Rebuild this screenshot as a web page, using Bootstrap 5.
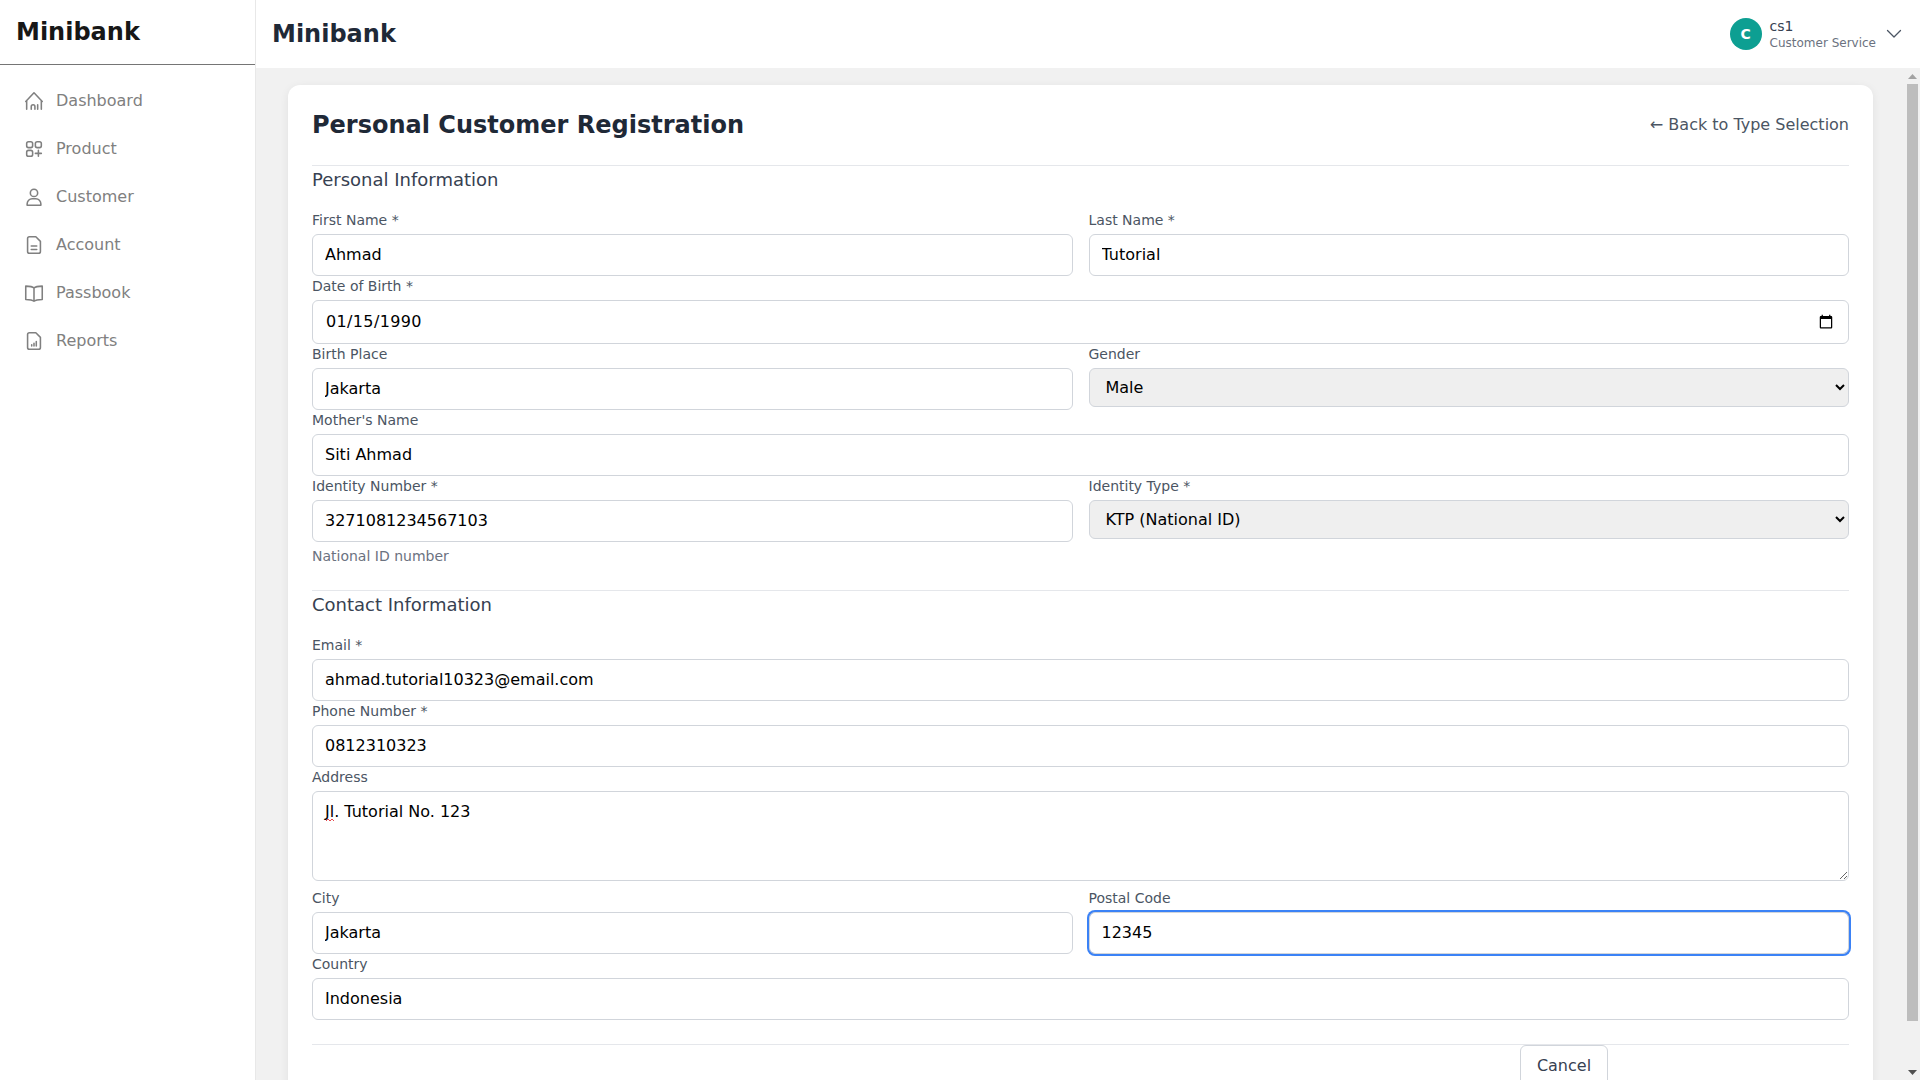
<!DOCTYPE html>
<html lang="en">
<head>
  <title>Minibank</title>
  <link href="https://cdn.jsdelivr.net/npm/bootstrap@5.3.0/dist/css/bootstrap.min.css" rel="stylesheet">
  <style>
    html, body { height: 100%; }
    body { font-family: "DejaVu Sans", sans-serif; overflow: hidden; background: #f1f1f1; color: #1f2937; }
    .side-panel { width: 256px; flex-shrink: 0; background: #fff; border-right: 1px solid #e8e8e8; }
    .side-brand { height: 65px; padding: 16px 16px 0; font-size: 24px; font-weight: 700; line-height: 32px; color: #171717; border-bottom: 1px solid #757575; }
    .side-menu { padding-top: 12px; }
    .side-item { height: 48px; padding-left: 23px; gap: 11px; color: #808080; font-size: 16px; text-decoration: none; }
    .side-item svg { width: 22px; height: 22px; fill: none; stroke: #808080; stroke-width: 1.7; stroke-linecap: round; stroke-linejoin: round; }
    .top-head { height: 68px; flex-shrink: 0; background: #fff; padding: 0 18px 0 16px; }
    .top-title { font-size: 24px; font-weight: 700; line-height: 32px; color: #1f2937; }
    .user-dot { width: 32px; height: 32px; background: #0d9f92; color: #fff; font-size: 14px; font-weight: 700; }
    .user-name { font-size: 14px; line-height: 18px; padding-top: 1px; color: #374151; }
    .user-role { font-size: 12px; line-height: 17px; color: #6b7280; }
    .user-arrow { margin-left: 10px; }
    .main-scroll { overflow: hidden; padding: 17px 32px 16px; min-width: 0; }
    .rail { width: 15px; flex-shrink: 0; background: #f1f1f1; }
    .rail-arrow { height: 16px; }
    .rail-thumb { width: 11px; margin: 0 auto 0 2px; background: #bdbdbd; }
    .reg-card { background: #fff; border-radius: 12px; padding: 24px; box-shadow: 0 2px 10px rgba(0,0,0,.07); }
    .reg-head { padding-bottom: 24px; border-bottom: 1px solid #e5e7eb; }
    .reg-title { font-size: 24px; font-weight: 700; line-height: 32px; margin: 0; color: #1f2937; }
    .back-link { font-size: 16px; color: #4b5563; text-decoration: none; }
    .sect-title { font-size: 18px; font-weight: 400; line-height: 28px; margin: 0 0 16px; color: #374151; }
    .sect-two { margin-top: 24px; border-top: 1px solid #e5e7eb; }
    .fld-label { display: block; font-size: 14px; line-height: 20px; margin: 0 0 4px; color: #4b5563; }
    .form-control.fld-input { height: 42px; padding: 7px 12px 9px; font-size: 16px; line-height: 24px; color: #000; border: 1px solid #d1d5db; border-radius: 6px; box-shadow: none; }
    .form-control.fld-date { height: 44px; padding: 8px 12px 8px 13px; letter-spacing: .35px; }
    .form-control.fld-area { height: 90px; min-height: 0; padding: 8px 12px; margin-bottom: 7px; resize: vertical; }
    .form-control.fld-focus { box-shadow: 0 0 0 2px #3b82f6; }
    .form-select.fld-select { height: 39px; padding: 0 12px; font-size: 16px; color: #000; border: 1px solid #d1d5db; border-radius: 6px; background-color: #efefef; background-image: none; appearance: auto; -webkit-appearance: auto; }
    .fld-hint { font-size: 14px; line-height: 20px; margin-top: 4px; color: #6b7280; }
    .spell-mark { position: absolute; left: 14px; top: 27px; width: 8px; height: 4px; fill: none; stroke: #e5484d; stroke-width: 1; }
    .foot-bar { margin-top: 24px; border-top: 1px solid #e5e7eb; padding-right: 241px; }
    .btn.cancel-btn { height: 44px; width: 88px; padding: 0 0 2px; font-size: 16px; color: #374151; background: #fff; border: 1px solid #d1d5db; border-radius: 6px; }
  </style>
</head>
<body class="d-flex">
  <!-- Sidebar -->
  <aside class="side-panel">
    <div class="side-brand">Minibank</div>
    <nav class="side-menu d-flex flex-column">
      <a href="#" class="side-item d-flex align-items-center">
        <svg viewBox="0 0 24 24"><path d="M4 21v-9.500L3 12.500 12 3l9 9.500-1-1V21"/><path d="M9 21v-3a2 2 0 0 1 4 0v3M16 21v-5"/></svg>Dashboard</a>
      <a href="#" class="side-item d-flex align-items-center">
        <svg viewBox="0 0 24 24"><rect x="4" y="4" width="6.500" height="6.500" rx="2"/><rect x="13.500" y="4" width="6.500" height="6.500" rx="2"/><rect x="4" y="13.500" width="6.500" height="6.500" rx="2"/><path d="M16.800 13.500V20M13.500 16.800H20"/></svg>Product</a>
      <a href="#" class="side-item d-flex align-items-center">
        <svg viewBox="0 0 24 24"><circle cx="12" cy="7.500" r="4"/><path d="M4.500 21v-1.500A5.500 5.500 0 0 1 10 14h4a5.500 5.500 0 0 1 5.500 5.500V21z"/></svg>Customer</a>
      <a href="#" class="side-item d-flex align-items-center">
        <svg viewBox="0 0 24 24"><path d="M14 3H7a2 2 0 0 0-2 2v14a2 2 0 0 0 2 2h10a2 2 0 0 0 2-2V8z"/><path d="M9 13h6M9 17h6"/></svg>Account</a>
      <a href="#" class="side-item d-flex align-items-center">
        <svg viewBox="0 0 24 24"><path d="M12 6.500C10.500 5 8 4.500 3 4.500V19c5 0 7.500.5 9 2 1.500-1.500 4-2 9-2V4.500c-5 0-7.500.5-9 2zM12 6.500V21"/></svg>Passbook</a>
      <a href="#" class="side-item d-flex align-items-center">
        <svg viewBox="0 0 24 24"><path d="M14 3H7a2 2 0 0 0-2 2v14a2 2 0 0 0 2 2h10a2 2 0 0 0 2-2V8z"/><path d="M9.500 17.500v-1.500M12 17.500v-3M14.500 17.500v-5"/></svg>Reports</a>
    </nav>
  </aside>

  <div class="d-flex flex-column flex-grow-1" style="min-width:0">
    <!-- Top header -->
    <header class="top-head d-flex align-items-center justify-content-between">
      <div class="top-title">Minibank</div>
      <div class="d-flex align-items-center">
        <div class="user-dot rounded-circle d-flex align-items-center justify-content-center">C</div>
        <div class="ms-2">
          <div class="user-name">cs1</div>
          <div class="user-role">Customer Service</div>
        </div>
        <svg class="user-arrow" width="16" height="16" viewBox="0 0 16 16" fill="none" stroke="#4b5563" stroke-width="1.300" stroke-linecap="round" stroke-linejoin="round"><path d="M1.500 4.500 8 11l6.500-6.500"/></svg>
      </div>
    </header>

    <div class="d-flex flex-grow-1" style="min-height:0">
      <!-- Form -->
      <main class="main-scroll flex-grow-1">
        <div class="reg-card">
          <div class="reg-head d-flex align-items-center justify-content-between">
            <h1 class="reg-title">Personal Customer Registration</h1>
            <a href="#" class="back-link">← Back to Type Selection</a>
          </div>

          <h2 class="sect-title">Personal Information</h2>
          <div class="row gx-3 gy-0">
            <div class="col-6">
              <label class="fld-label">First Name *</label>
              <input type="text" class="form-control fld-input" value="Ahmad">
            </div>
            <div class="col-6">
              <label class="fld-label">Last Name *</label>
              <input type="text" class="form-control fld-input" value="Tutorial">
            </div>
            <div class="col-12">
              <label class="fld-label">Date of Birth *</label>
              <input type="date" class="form-control fld-input fld-date" value="1990-01-15">
            </div>
            <div class="col-6">
              <label class="fld-label">Birth Place</label>
              <input type="text" class="form-control fld-input" value="Jakarta">
            </div>
            <div class="col-6">
              <label class="fld-label">Gender</label>
              <select class="form-select fld-select"><option>Male</option><option>Female</option></select>
            </div>
            <div class="col-12">
              <label class="fld-label">Mother's Name</label>
              <input type="text" class="form-control fld-input" value="Siti Ahmad">
            </div>
            <div class="col-6">
              <label class="fld-label">Identity Number *</label>
              <input type="text" class="form-control fld-input" value="3271081234567103">
              <div class="fld-hint">National ID number</div>
            </div>
            <div class="col-6">
              <label class="fld-label">Identity Type *</label>
              <select class="form-select fld-select"><option>KTP (National ID)</option><option>Passport</option></select>
            </div>
          </div>

          <div class="sect-two">
            <h2 class="sect-title">Contact Information</h2>
            <div class="row gx-3 gy-0">
              <div class="col-12">
                <label class="fld-label">Email *</label>
                <input type="email" class="form-control fld-input" value="ahmad.tutorial10323@email.com">
              </div>
              <div class="col-12">
                <label class="fld-label">Phone Number *</label>
                <input type="text" class="form-control fld-input" value="0812310323">
              </div>
              <div class="col-12">
                <label class="fld-label">Address</label>
                <div class="position-relative">
                  <textarea class="form-control fld-input fld-area" spellcheck="false">Jl. Tutorial No. 123</textarea>
                  <svg class="spell-mark" viewBox="0 0 8 4"><path d="M0 3 2 1l2 2 2-2 2 2"/></svg>
                </div>
              </div>
              <div class="col-6">
                <label class="fld-label">City</label>
                <input type="text" class="form-control fld-input" value="Jakarta">
              </div>
              <div class="col-6">
                <label class="fld-label">Postal Code</label>
                <input type="text" class="form-control fld-input fld-focus" value="12345">
              </div>
              <div class="col-12">
                <label class="fld-label">Country</label>
                <input type="text" class="form-control fld-input" value="Indonesia">
              </div>
            </div>
          </div>

          <div class="foot-bar d-flex justify-content-end">
            <button type="button" class="btn cancel-btn">Cancel</button>
          </div>
        </div>
      </main>

      <!-- Scrollbar of the form pane -->
      <div class="rail d-flex flex-column">
        <div class="rail-arrow d-flex align-items-center justify-content-center">
          <svg width="9" height="5" viewBox="0 0 9 5"><path d="M0 5 4.500 0 9 5z" fill="#a3a3a3"/></svg>
        </div>
        <div class="rail-thumb" style="height:937px"></div>
        <div class="rail-arrow d-flex align-items-center justify-content-center mt-auto">
          <svg width="9" height="5" viewBox="0 0 9 5"><path d="M0 0 4.500 5 9 0z" fill="#505050"/></svg>
        </div>
      </div>
    </div>
  </div>

  <script src="https://cdn.jsdelivr.net/npm/bootstrap@5.3.0/dist/js/bootstrap.bundle.min.js"></script>
</body>
</html>
